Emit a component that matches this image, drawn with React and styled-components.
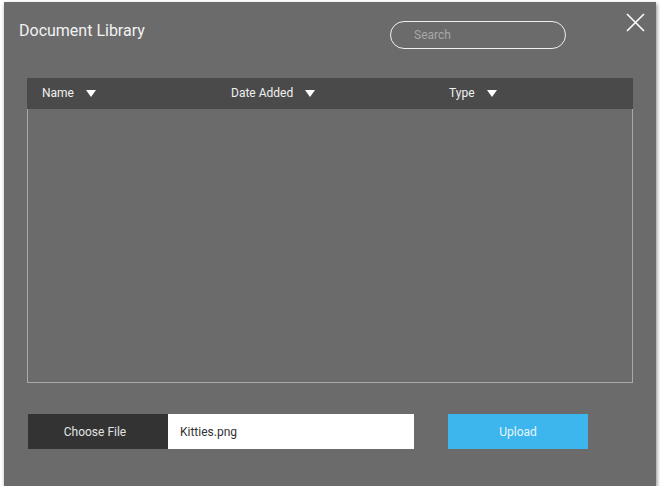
import React from "react";
import styled, { createGlobalStyle } from "styled-components";

const Global = createGlobalStyle`
  html, body { margin: 0; padding: 0; background: #ffffff; }
  body { font-family: Roboto, "Liberation Sans", sans-serif; }
  * { box-sizing: border-box; }
`;

const Panel = styled.div`
  position: relative;
  margin: 2px 0 0 4px;
  width: 652px;
  height: 484px;
  background: #6b6b6b;
  box-shadow: 1px 2px 4px rgba(0, 0, 0, 0.45);
  display: flex;
  flex-direction: column;
`;

const TopBar = styled.div`
  display: flex;
  align-items: flex-start;
  height: 76px;
  padding: 19px 90px 0 15px;
`;

const Title = styled.h1`
  margin: 0;
  font-size: 16px;
  line-height: 20px;
  font-weight: 400;
  color: #f2f2f2;
`;

const Search = styled.div`
  margin: 0 0 0 auto;
  width: 176px;
  height: 28px;
  border: 1.5px solid #f0f0f0;
  border-radius: 14px;
  display: flex;
  align-items: center;
  padding-left: 23px;
  font-size: 12px;
  color: #a8a8a8;
`;

const Close = styled.button`
  position: absolute;
  top: 10px;
  right: 11px;
  width: 20px;
  height: 20px;
  padding: 0;
  border: none;
  background: transparent;
  display: flex;
  align-items: center;
  justify-content: center;
`;

const Content = styled.div`
  padding: 0 23px;
  display: flex;
  flex-direction: column;
`;

const HeaderRow = styled.div`
  display: grid;
  grid-template-columns: 189px 218px 1fr;
  align-items: center;
  height: 31px;
  padding: 0 0 1px 15px;
  background: #4a4a4a;
`;

const HeaderCell = styled.div`
  display: flex;
  align-items: center;
  gap: 12px;
  font-size: 12px;
  color: #f0f0f0;
`;

const Caret = styled.span`
  width: 0;
  height: 0;
  border-left: 5.5px solid transparent;
  border-right: 5.5px solid transparent;
  border-top: 7px solid #ffffff;
  margin-top: 1px;
`;

const TableBody = styled.div`
  height: 274px;
  border: 1px solid #a9a9a9;
  border-top: none;
`;

const BottomRow = styled.div`
  display: flex;
  align-items: stretch;
  height: 35px;
  margin: 31px 0 0 1px;
`;

const ChooseButton = styled.div`
  width: 140px;
  padding-right: 6px;
  background: #333333;
  color: #e2e2e2;
  font-size: 12px;
  display: flex;
  align-items: center;
  justify-content: center;
`;

const FileName = styled.div`
  width: 246px;
  background: #ffffff;
  color: #333333;
  font-size: 12px;
  display: flex;
  align-items: center;
  padding-left: 12px;
`;

const UploadButton = styled.div`
  width: 140px;
  margin-left: 34px;
  background: #3db6ed;
  color: #e6f5fc;
  font-size: 12px;
  display: flex;
  align-items: center;
  justify-content: center;
`;

const columns = ["Name", "Date Added", "Type"];

export default function App() {
  return (
    <>
      <Global />
      <Panel>
        <TopBar>
          <Title>Document Library</Title>
          <Search>Search</Search>
        </TopBar>
        <Close aria-label="Close">
          <svg width="19" height="19" viewBox="0 0 19 19">
            <path d="M1 1 L18 18 M18 1 L1 18" stroke="#ffffff" strokeWidth="1.6" fill="none" />
          </svg>
        </Close>
        <Content>
          <HeaderRow>
            {columns.map((c) => (
              <HeaderCell key={c}>
                {c}
                <Caret />
              </HeaderCell>
            ))}
          </HeaderRow>
          <TableBody />
          <BottomRow>
            <ChooseButton>Choose File</ChooseButton>
            <FileName>Kitties.png</FileName>
            <UploadButton>Upload</UploadButton>
          </BottomRow>
        </Content>
      </Panel>
    </>
  );
}
